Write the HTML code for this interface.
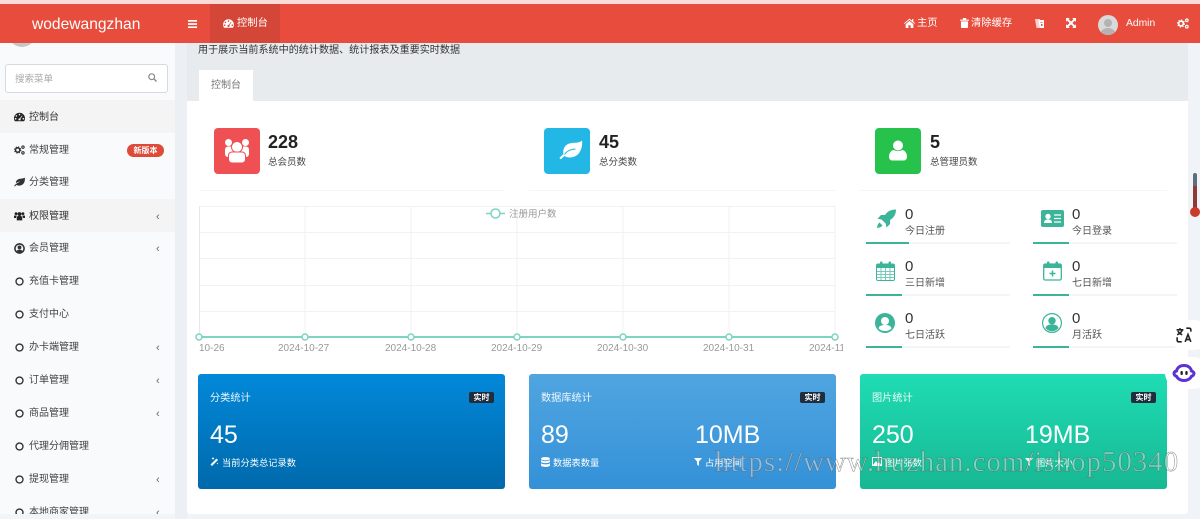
<!DOCTYPE html>
<html lang="zh-CN">
<head>
<meta charset="utf-8">
<title>控制台</title>
<style>
html,body{margin:0;padding:0;width:1200px;height:519px;overflow:hidden;background:#f0f4f8;}
body{position:relative;font-family:"Liberation Sans","Noto Sans CJK SC",sans-serif;font-size:10px;color:#444;}
#w{position:absolute;left:0;top:0;width:1200px;height:519px;overflow:hidden;filter:blur(.3px);}
.a{position:absolute;white-space:nowrap;}
svg{position:absolute;display:block;}
.row{position:absolute;left:0;width:175px;height:33px;line-height:33px;color:#444;font-size:10px;}
.row span{position:absolute;left:29px;top:1px;}
.row svg{left:14px;top:12px;}
.row i{position:absolute;left:156px;top:2px;font-style:normal;color:#666;font-size:11px;}
.num{position:absolute;font-size:18px;font-weight:bold;color:#222;line-height:20px;}
.lab{position:absolute;font-size:9.500px;color:#444;line-height:14px;white-space:nowrap;}
.tile{position:absolute;top:128px;width:46px;height:46px;border-radius:4px;}
.line{position:absolute;top:190px;height:1px;background:#f4f5f6;}
.sn{position:absolute;font-size:15px;color:#333;line-height:16px;}
.sl{position:absolute;font-size:10px;color:#555;line-height:14px;white-space:nowrap;margin-top:1.500px;}
.tr{position:absolute;height:2px;width:144px;background:#f4f5f6;}
.tr b{display:block;height:2px;background:#3cb49a;}
.card{position:absolute;top:374px;width:307px;height:115px;border-radius:3px;color:#fff;}
.card .t{position:absolute;left:12px;top:18px;font-size:10.200px;line-height:14px;opacity:.92;}
.card .b{position:absolute;right:11px;top:18px;width:25px;height:11px;background:#1f2d3d;border-radius:2px;font-size:8px;line-height:11px;text-align:center;font-weight:bold;color:#fff;}
.card .n{position:absolute;top:47px;font-size:25px;line-height:28px;}
.card .s{position:absolute;top:83px;font-size:9.250px;line-height:13px;white-space:nowrap;}
.ax{position:absolute;top:343px;font-size:10px;color:#999;line-height:12px;white-space:nowrap;}
.nav{position:absolute;color:#fff;font-size:10.300px;line-height:14px;white-space:nowrap;}
</style>
</head>
<body>
<div id="w">
<svg width="0" height="0" style="position:absolute">
<defs>
<symbol id="dash" viewBox="0 0 12 10"><path fill="currentColor" fill-rule="evenodd" d="M6 .3C2.700.3 0 3 0 6.300c0 1.300.4 2.400 1 3.400h10c.6-1 1-2.100 1-3.400C12 3 9.300.3 6 .3zM6 1.400a.9.9 0 1 1 0 1.800.9.900 0 0 1 0-1.800zM2.600 2.900a.9.900 0 1 1 0 1.800.9.900 0 0 1 0-1.800zM1.800 6a.9.900 0 1 1 0 1.800.9.900 0 0 1 0-1.800zM10.200 6a.9.900 0 1 1 0 1.800.9.900 0 0 1 0-1.800zM8.700 3.300l.6.400L7 7c.4.500.3 1.300-.2 1.700H5.200c-.6-.5-.6-1.400 0-1.900.3-.2.700-.3 1-.2z"/></symbol>
<symbol id="cogs" viewBox="0 0 12 11"><circle cx="4" cy="5.500" r="2.400" fill="none" stroke="currentColor" stroke-width="1.700"/><circle cx="4" cy="5.500" r="3.500" fill="none" stroke="currentColor" stroke-width="1.100" stroke-dasharray="1.300 1.450"/><circle cx="9.800" cy="2.300" r="1.300" fill="none" stroke="currentColor" stroke-width="1.200"/><circle cx="9.800" cy="8.700" r="1.300" fill="none" stroke="currentColor" stroke-width="1.200"/></symbol>
<symbol id="leaf" viewBox="0 0 14 12"><path fill="currentColor" d="M13.600 .5c.5 1 .4 3.400-.3 5.400-1 2.900-3.600 4.700-6.300 4.700-1.500 0-2.700-.4-3.600-1-.7.5-1.400 1.200-2 1.800-.5.300-1.300-.2-.9-.9.800-1 4-4 7.500-5-2.500 0-4.500 1.200-5.500 2-.6-3 2.200-5.500 5.500-5.700 2.200-.1 4.300-.2 5.600-1.300z"/></symbol>
<symbol id="users" viewBox="0 0 14 11"><circle cx="7" cy="3" r="2.500" fill="currentColor"/><circle cx="2.600" cy="2.500" r="1.800" fill="currentColor"/><circle cx="11.400" cy="2.500" r="1.800" fill="currentColor"/><path fill="currentColor" d="M3.500 11V8c0-1.600 1.200-2.500 2-2.500h3c.8 0 2 .9 2 2.500v3zM0 8V5.500C0 5 .5 4.800 1 4.800h2.500L2.600 8zM14 8V5.500c0-.5-.5-.7-1-.7h-2.500l.9 3.200z"/></symbol>
<symbol id="ucircle" viewBox="0 0 12 12"><circle cx="6" cy="6" r="5" fill="none" stroke="currentColor" stroke-width="1.700"/><circle cx="6" cy="4.800" r="2.100" fill="currentColor"/><path fill="currentColor" d="M2.500 9.500c.5-1.700 1.800-2.300 3.500-2.300s3 .6 3.500 2.300L6 11z"/></symbol>
<symbol id="circ" viewBox="0 0 12 12"><circle cx="6" cy="6" r="3.800" fill="none" stroke="currentColor" stroke-width="1.500"/></symbol>
</defs>
</svg>

<!-- page backgrounds -->
<div class="a" style="left:0;top:0;width:1200px;height:4px;background:#f9dcd8;"></div>
<div class="a" style="left:0;top:43px;width:175px;height:471px;background:#f9fafc;overflow:hidden;">
  <div class="a" style="left:8px;top:-24px;width:28px;height:28px;border-radius:50%;background:#c6c6c6;"></div>
</div>
<div class="a" style="left:0;top:514px;width:175px;height:5px;background:#f2f5f8;"></div>
<div class="a" style="left:175px;top:43px;width:12px;height:476px;background:#ecf0f5;"></div>
<div class="a" style="left:187px;top:43px;width:1001px;height:58px;background:#e7ebee;"></div>
<div class="a" style="left:187px;top:101px;width:1001px;height:413px;background:#fff;border-radius:0 0 3px 3px;"></div>

<!-- sub title + tab -->
<div class="a" style="left:198px;top:43.500px;font-size:10.080px;line-height:14px;color:#333;">用于展示当前系统中的统计数据、统计报表及重要实时数据</div>
<div class="a" style="left:199px;top:70px;width:54px;height:31px;background:#fff;text-align:center;line-height:31px;color:#777;font-size:10px;">控制台</div>

<!-- header -->
<div class="a" style="left:0;top:4px;width:1200px;height:39px;background:#e74c3c;"></div>
<div class="a" style="left:210px;top:4px;width:70px;height:39px;background:#d44638;"></div>
<div class="a" style="left:32px;top:15px;color:#fff;font-size:15.600px;line-height:20px;">wodewangzhan</div>
<svg style="left:188px;top:20px" width="9" height="8"><rect width="9" height="1.700" fill="#fff"/><rect y="3.200" width="9" height="1.700" fill="#fff"/><rect y="6.400" width="9" height="1.700" fill="#fff"/></svg>
<svg style="left:223px;top:19px;color:#fff" width="11" height="9"><use href="#dash"/></svg>
<div class="nav" style="left:237px;top:17px;">控制台</div>
<svg style="left:904px;top:18px" width="11" height="10" viewBox="0 0 10 9"><path fill="#fff" d="M5 .5 0 4.700l.5.600L5 1.700l4.500 3.600.5-.6L8.500 3.400V1H7.300v1.300zM1.500 5.500V9h2.500V6.500h2V9h2.500V5.500L5 2.700z"/></svg>
<div class="nav" style="left:917px;top:17px;">主页</div>
<svg style="left:960px;top:18px" width="9" height="10" viewBox="0 0 8 9"><path fill="#fff" d="M0 1.500h8v1H0zM2.500 0h3v1.500h-3zM.8 3h6.400v5.200c0 .5-.3.800-.8.800H1.600c-.5 0-.8-.3-.8-.8z"/></svg>
<div class="nav" style="left:971px;top:17px;">清除缓存</div>
<svg style="left:1035px;top:18px" width="9" height="11" viewBox="0 0 9 11"><path fill="#fff" d="M0 1h5l1 9H1.500z" opacity=".75"/><path fill="#fff" d="M3.500 2H9v8H5z"/><path fill="#e74c3c" d="M5.500 4h2v.8h-2zM6 6h1.500v2H6z"/></svg>
<svg style="left:1066px;top:18px" width="10" height="10" viewBox="0 0 10 10"><path fill="#fff" d="M0 0h3.800L2.600 1.200 5 3.600 7.400 1.200 6.200 0H10v3.800L8.800 2.600 6.400 5l2.400 2.400L10 6.200V10H6.200l1.200-1.200L5 6.400 2.600 8.800 3.800 10H0V6.200l1.200 1.200L3.600 5 1.200 2.600 0 3.800z"/></svg>
<div class="a" style="left:1098px;top:15px;width:20px;height:20px;border-radius:50%;background:#d9d9d9;overflow:hidden;">
  <div class="a" style="left:6px;top:4px;width:8px;height:8px;border-radius:50%;background:#b3b3b3;"></div>
  <div class="a" style="left:3px;top:13px;width:14px;height:10px;border-radius:50%;background:#b3b3b3;"></div>
</div>
<div class="nav" style="left:1126px;top:16.500px;font-size:10.300px;">Admin</div>
<svg style="left:1177px;top:18px;color:#fff" width="12" height="11"><use href="#cogs"/></svg>

<!-- sidebar -->
<div class="a" style="left:5px;top:64px;width:161px;height:27px;background:#fff;border:1px solid #d6dade;border-radius:3px;"></div>
<div class="a" style="left:15px;top:72.500px;font-size:9.500px;line-height:14px;color:#aaa;">搜索菜单</div>
<svg style="left:148px;top:73px" width="9" height="9" viewBox="0 0 9 9"><circle cx="3.700" cy="3.700" r="2.900" fill="none" stroke="#888" stroke-width="1.200"/><path d="M5.800 5.800 8.500 8.500" stroke="#888" stroke-width="1.400"/></svg>

<div class="a" style="left:0;top:43px;width:175px;height:471px;overflow:hidden;">
<div class="row" style="top:57px;background:#f4f4f5;color:#333;"><svg width="11" height="10" style="color:#222"><use href="#dash"/></svg><span>控制台</span></div>
<div class="row" style="top:90px;"><svg width="11" height="10" style="color:#333"><use href="#cogs"/></svg><span>常规管理</span>
  <div class="a" style="left:127px;top:11px;width:37px;height:13px;border-radius:7px;background:#dd4b39;color:#fff;font-size:8px;line-height:13px;text-align:center;font-weight:bold;">新版本</div></div>
<div class="row" style="top:122px;"><svg width="11" height="10" style="color:#333"><use href="#leaf"/></svg><span>分类管理</span></div>
<div class="row" style="top:156px;background:#f4f4f5;color:#333;"><svg width="11" height="10" style="color:#222"><use href="#users"/></svg><span>权限管理</span><i>‹</i></div>
<div class="row" style="top:188px;"><svg width="11" height="11" style="color:#333"><use href="#ucircle"/></svg><span>会员管理</span><i>‹</i></div>
<div class="row" style="top:221px;"><svg width="11" height="11" style="color:#333"><use href="#circ"/></svg><span>充值卡管理</span></div>
<div class="row" style="top:254px;"><svg width="11" height="11" style="color:#333"><use href="#circ"/></svg><span>支付中心</span></div>
<div class="row" style="top:287px;"><svg width="11" height="11" style="color:#333"><use href="#circ"/></svg><span>办卡端管理</span><i>‹</i></div>
<div class="row" style="top:320px;"><svg width="11" height="11" style="color:#333"><use href="#circ"/></svg><span>订单管理</span><i>‹</i></div>
<div class="row" style="top:353px;"><svg width="11" height="11" style="color:#333"><use href="#circ"/></svg><span>商品管理</span><i>‹</i></div>
<div class="row" style="top:386px;"><svg width="11" height="11" style="color:#333"><use href="#circ"/></svg><span>代理分佣管理</span></div>
<div class="row" style="top:419px;"><svg width="11" height="11" style="color:#333"><use href="#circ"/></svg><span>提现管理</span><i>‹</i></div>
<div class="row" style="top:451.500px;"><svg width="11" height="11" style="color:#333"><use href="#circ"/></svg><span>本地商家管理</span><i>‹</i></div>
</div>

<!-- top stat tiles -->
<div class="tile" style="left:214px;background:#ee5054;"><svg style="left:0;top:0" width="46" height="46" viewBox="0 0 46 46"><g fill="#fff"><circle cx="14.500" cy="14.500" r="3.500"/><circle cx="31.500" cy="14.500" r="3.500"/><rect x="11" y="18.500" width="24" height="10.500" rx="3"/></g><circle cx="23" cy="19" r="5.500" fill="#fff" stroke="#ee5054"/><rect x="14.500" y="24" width="17" height="11" rx="3.500" fill="#fff" stroke="#ee5054"/></svg></div>
<div class="num" style="left:268px;top:132px;">228</div>
<div class="lab" style="left:268px;top:156px;">总会员数</div>
<div class="line" style="left:199px;width:306px;"></div>

<div class="tile" style="left:544px;background:#23b7e5;"><svg style="left:0;top:0" width="46" height="46" viewBox="0 0 46 46"><path fill="#fff" d="M38 12.500c.6 3.500-.2 8.500-2.500 12-2.200 3.300-6 5-9.500 5-2.200 0-4-.5-5.500-1.500-1.200.9-2.400 2-3.300 3-.9.600-2-.5-1.300-1.500 1.200-1.400 2.500-2.600 3.600-3.500-1-3.500.5-8 4.500-10 2.500-1.300 5.500-1.200 8-1.300 2.300-.1 4.500-.6 6-2.200z"/><path fill="none" stroke="#23b7e5" stroke-width="1" d="M20.500 26.500c2-3.200 6-5.200 11-5.500"/></svg></div>
<div class="num" style="left:599px;top:132px;">45</div>
<div class="lab" style="left:599px;top:156px;">总分类数</div>
<div class="line" style="left:529px;width:307px;"></div>

<div class="tile" style="left:875px;background:#27c24c;"><svg style="left:14px;top:12px" width="18" height="21" viewBox="0 0 18 21"><circle cx="9" cy="5.500" r="5" fill="#fff"/><path fill="#fff" d="M0 17c0-5 3-7 5-7 2 1.500 6 1.500 8 0 2 0 5 2 5 7 0 2-1.500 3.500-3 3.500H3C1.500 20.500 0 19 0 17z"/></svg></div>
<div class="num" style="left:930px;top:132px;">5</div>
<div class="lab" style="left:930px;top:156px;">总管理员数</div>
<div class="line" style="left:859px;width:308px;"></div>

<!-- chart -->
<svg style="left:195px;top:200px" width="650" height="150" viewBox="195 200 650 150">
  <g stroke="#f1f2f4" stroke-width="1" fill="none">
    <path d="M199 206.500H835M199 232.500H835M199 258.500H835M199 285.500H835M199 311.500H835"/>
    <path d="M305 206V337M411 206V337M517 206V337M623 206V337M729 206V337M835 206V337"/>
  </g>
  <path d="M199.500 206V337" stroke="#e6e8ea" stroke-width="1"/>
  <path d="M199 337H835" stroke="#7ed3c3" stroke-width="2"/>
  <g fill="#fff" stroke="#7ed3c3" stroke-width="1.500">
    <circle cx="199" cy="337" r="3"/><circle cx="305" cy="337" r="3"/><circle cx="411" cy="337" r="3"/><circle cx="517" cy="337" r="3"/><circle cx="623" cy="337" r="3"/><circle cx="729" cy="337" r="3"/><circle cx="835" cy="337" r="3"/>
  </g>
  <path d="M486 213.500H505" stroke="#7ed3c3" stroke-width="1.500"/>
  <circle cx="495.500" cy="213.500" r="4.500" fill="#fff" stroke="#7ed3c3" stroke-width="1.500"/>
</svg>
<div class="a" style="left:509px;top:207.500px;font-size:9.500px;line-height:14px;color:#999;">注册用户数</div>
<div class="ax" style="left:199px;">10-26</div>
<div class="ax" style="left:278px;">2024-10-27</div>
<div class="ax" style="left:385px;">2024-10-28</div>
<div class="ax" style="left:491px;">2024-10-29</div>
<div class="ax" style="left:597px;">2024-10-30</div>
<div class="ax" style="left:703px;">2024-10-31</div>
<div class="a" style="left:809px;top:343px;width:34px;overflow:hidden;font-size:10px;color:#999;line-height:12px;">2024-11-01</div>

<!-- right mini stats -->
<svg style="left:876px;top:209px" width="20" height="20" viewBox="0 0 20 20"><path fill="#3cb49a" d="M20 .5c-4.500 0-8.500 1.500-11 5.500H5L1.500 9.800l4 .7 4.200 4 .7 4 3.700-3.500V11c4-2.500 5.900-6 5.900-10.500z"/><path fill="#3cb49a" d="M3.500 13.500C2 14.500 1.200 17 1 19c2-.2 4.500-1 5.500-2.500z"/></svg>
<div class="sn" style="left:905px;top:207px;">0</div><div class="sl" style="left:905px;top:223px;">今日注册</div>
<div class="tr" style="left:866px;top:242px;"><b style="width:43px"></b></div>

<svg style="left:1041px;top:210px" width="23" height="18" viewBox="0 0 23 18"><rect width="23" height="17" rx="2" fill="#3cb49a"/><circle cx="7" cy="6.500" r="2.700" fill="#fff"/><path fill="#fff" d="M3 13c0-3 2-3.500 4-3.500s4 .5 4 3.500z"/><path stroke="#fff" stroke-width="1.300" d="M13 5h7M13 8.500h7M13 12h7"/></svg>
<div class="sn" style="left:1072px;top:207px;">0</div><div class="sl" style="left:1072px;top:223px;">今日登录</div>
<div class="tr" style="left:1033px;top:242px;"><b style="width:36px"></b></div>

<svg style="left:876px;top:261px" width="19" height="20" viewBox="0 0 19 20"><rect x=".5" y="3" width="18" height="16.500" rx="1.500" fill="#fff" stroke="#3cb49a"/><rect x=".5" y="3" width="18" height="4" fill="#3cb49a"/><path stroke="#3cb49a" stroke-opacity=".7" d="M1 10.500H18M1 13.500H18M1 16.500H18M5 7V19M9.500 7V19M14 7V19"/><rect x="4" y="0.500" width="2.500" height="5" rx="1" fill="#3cb49a"/><rect x="12.500" y="0.500" width="2.500" height="5" rx="1" fill="#3cb49a"/></svg>
<div class="sn" style="left:905px;top:259px;">0</div><div class="sl" style="left:905px;top:275px;">三日新增</div>
<div class="tr" style="left:866px;top:294px;"><b style="width:36px"></b></div>

<svg style="left:1043px;top:261px" width="19" height="20" viewBox="0 0 19 20"><rect x=".7" y="3" width="17.600" height="16" rx="1.500" fill="#fff" stroke="#3cb49a" stroke-width="1.300"/><rect x=".5" y="3" width="18" height="4" fill="#3cb49a"/><path stroke="#3cb49a" stroke-width="1.500" d="M9.500 9.500v6M6.500 12.500h6"/><rect x="4" y="0.500" width="2.500" height="5" rx="1" fill="#3cb49a"/><rect x="12.500" y="0.500" width="2.500" height="5" rx="1" fill="#3cb49a"/></svg>
<div class="sn" style="left:1072px;top:259px;">0</div><div class="sl" style="left:1072px;top:275px;">七日新增</div>
<div class="tr" style="left:1033px;top:294px;"><b style="width:36px"></b></div>

<svg style="left:875px;top:313px" width="20" height="20" viewBox="0 0 20 20"><circle cx="10" cy="10" r="10" fill="#3cb49a"/><circle cx="10" cy="8" r="4" fill="#fff"/><path fill="#fff" d="M3.500 15.500c.5-2.500 2.500-3.500 6.500-3.500s6 1 6.500 3.500C14.500 17.500 12 18 10 18s-4.500-.5-6.500-2.500z"/></svg>
<div class="sn" style="left:905px;top:311px;">0</div><div class="sl" style="left:905px;top:327px;">七日活跃</div>
<div class="tr" style="left:866px;top:346px;"><b style="width:36px"></b></div>

<svg style="left:1042px;top:313px" width="20" height="20" viewBox="0 0 20 20"><circle cx="10" cy="10" r="9.400" fill="#fff" stroke="#3cb49a" stroke-width="1.200"/><circle cx="10" cy="7.700" r="3.700" fill="#3cb49a"/><path fill="#3cb49a" d="M3.500 15c.8-2.800 3-3.500 6.500-3.500s5.700.7 6.500 3.500c-1.500 2-4 3.200-6.500 3.200S5 17 3.500 15z"/></svg>
<div class="sn" style="left:1072px;top:311px;">0</div><div class="sl" style="left:1072px;top:327px;">月活跃</div>
<div class="tr" style="left:1033px;top:346px;"><b style="width:36px"></b></div>

<!-- cards -->
<div class="card" style="left:198px;background:linear-gradient(#0288d9,#0069ab);">
  <div class="t">分类统计</div><div class="b">实时</div>
  <div class="n" style="left:12px;">45</div>
  <svg style="left:12px;top:83px" width="9" height="9" viewBox="0 0 9 9"><path fill="#fff" d="M6.500 1.500 8 3 2 9 .5 7.500zM3 0l.5 1L4.500 1.500l-1 .5L3 3l-.5-1L1.500 1.500l1-.5zM7.500 5.500l.3.700.7.300-.7.300-.3.700-.3-.7-.7-.3.700-.3z"/></svg>
  <div class="s" style="left:24px;">当前分类总记录数</div>
</div>
<div class="card" style="left:529px;background:linear-gradient(#50a5e0,#3491d8);">
  <div class="t">数据库统计</div><div class="b">实时</div>
  <div class="n" style="left:12px;">89</div>
  <svg style="left:12px;top:83px" width="9" height="10" viewBox="0 0 9 10"><ellipse cx="4.500" cy="1.700" rx="4.500" ry="1.700" fill="#fff"/><path fill="#fff" d="M0 3v1.500c0 1 2 1.600 4.500 1.600S9 5.500 9 4.500V3c-1 .8-2.800 1.200-4.500 1.200S1 3.800 0 3zM0 6.300v2c0 1 2 1.700 4.500 1.700S9 9.300 9 8.300v-2C8 7.100 6.200 7.400 4.500 7.400S1 7.100 0 6.300z"/></svg>
  <div class="s" style="left:24px;">数据表数量</div>
  <div class="n" style="left:166px;">10MB</div>
  <svg style="left:165px;top:84px" width="8" height="8" viewBox="0 0 8 8"><path fill="#fff" d="M0 0h8L5 3.500V8L3 6.500v-3z"/></svg>
  <div class="s" style="left:176px;">占用空间</div>
</div>
<div class="card" style="left:860px;background:linear-gradient(#1fdcb4,#17b893);">
  <div class="t">图片统计</div><div class="b">实时</div>
  <div class="n" style="left:12px;">250</div>
  <svg style="left:12px;top:83px" width="10" height="9" viewBox="0 0 10 9"><rect x=".5" y=".5" width="9" height="8" fill="none" stroke="#fff"/><path fill="#fff" d="M1 8 4 4l2 2.500L7.500 5 9 8z"/></svg>
  <div class="s" style="left:25px;">图片张数</div>
  <div class="n" style="left:165px;">19MB</div>
  <svg style="left:165px;top:84px" width="8" height="8" viewBox="0 0 8 8"><path fill="#fff" d="M0 0h8L5 3.500V8L3 6.500v-3z"/></svg>
  <div class="s" style="left:176px;">图片大小</div>
</div>

<!-- thermometer -->
<div class="a" style="left:1193px;top:173px;width:4px;height:13px;background:#5d6f7d;border-radius:2px 2px 0 0;"></div>
<div class="a" style="left:1193px;top:186px;width:4px;height:24px;background:#8e3a36;"></div>
<div class="a" style="left:1190px;top:207px;width:10px;height:10px;background:#c93a2a;border-radius:50%;"></div>

<!-- floating buttons -->
<div class="a" style="left:1169px;top:320px;width:40px;height:30px;border-radius:15px;background:#fff;"></div>
<svg style="left:1176px;top:327px" width="16" height="16" viewBox="0 0 14 14"><path fill="none" stroke="#222" stroke-width="1.400" d="M.5 2.500h6M3.500 1v1.500M5.500 2.500C5 4.500 3 6 1 6.800M1.700 3.500C2.500 5 4 6.300 5.500 6.800M8 13l2.500-6.500L13 13M8.800 11h3.400M1 9v2.500c0 1 .6 1.500 1.500 1.500H5M13 4V2.500C13 1.500 12.400 1 11.500 1H9"/></svg>
<div class="a" style="left:1165px;top:357px;width:44px;height:32px;border-radius:16px;background:#fff;"></div>
<svg style="left:1172px;top:363px" width="24" height="20" viewBox="0 0 24 20"><path fill="#fff" stroke="#5a32d6" stroke-width="3" d="M12 2.500c5 0 7 3 7.500 5.500.9.300 2.500 1 2.500 2.500S20.500 13 19.500 13.300C18 16.500 15 17.500 12 17.500s-6-1-7.500-4.200C3.500 13 2 12 2 10.500S3.100 8.300 4.500 8C5 5.500 7 2.500 12 2.500z"/><rect x="8.500" y="8" width="2.300" height="4" rx="1" fill="#222"/><rect x="13.300" y="8" width="2.300" height="4" rx="1" fill="#222"/></svg>
</div>

<!-- watermark -->
<div class="a" style="left:715px;top:447px;font-family:'Liberation Serif',serif;font-size:29px;line-height:30px;letter-spacing:.94px;color:rgba(255,255,255,.4);-webkit-text-stroke:.5px rgba(90,90,90,.7);">https://www.huzhan.com/ishop50340</div>
</body>
</html>
